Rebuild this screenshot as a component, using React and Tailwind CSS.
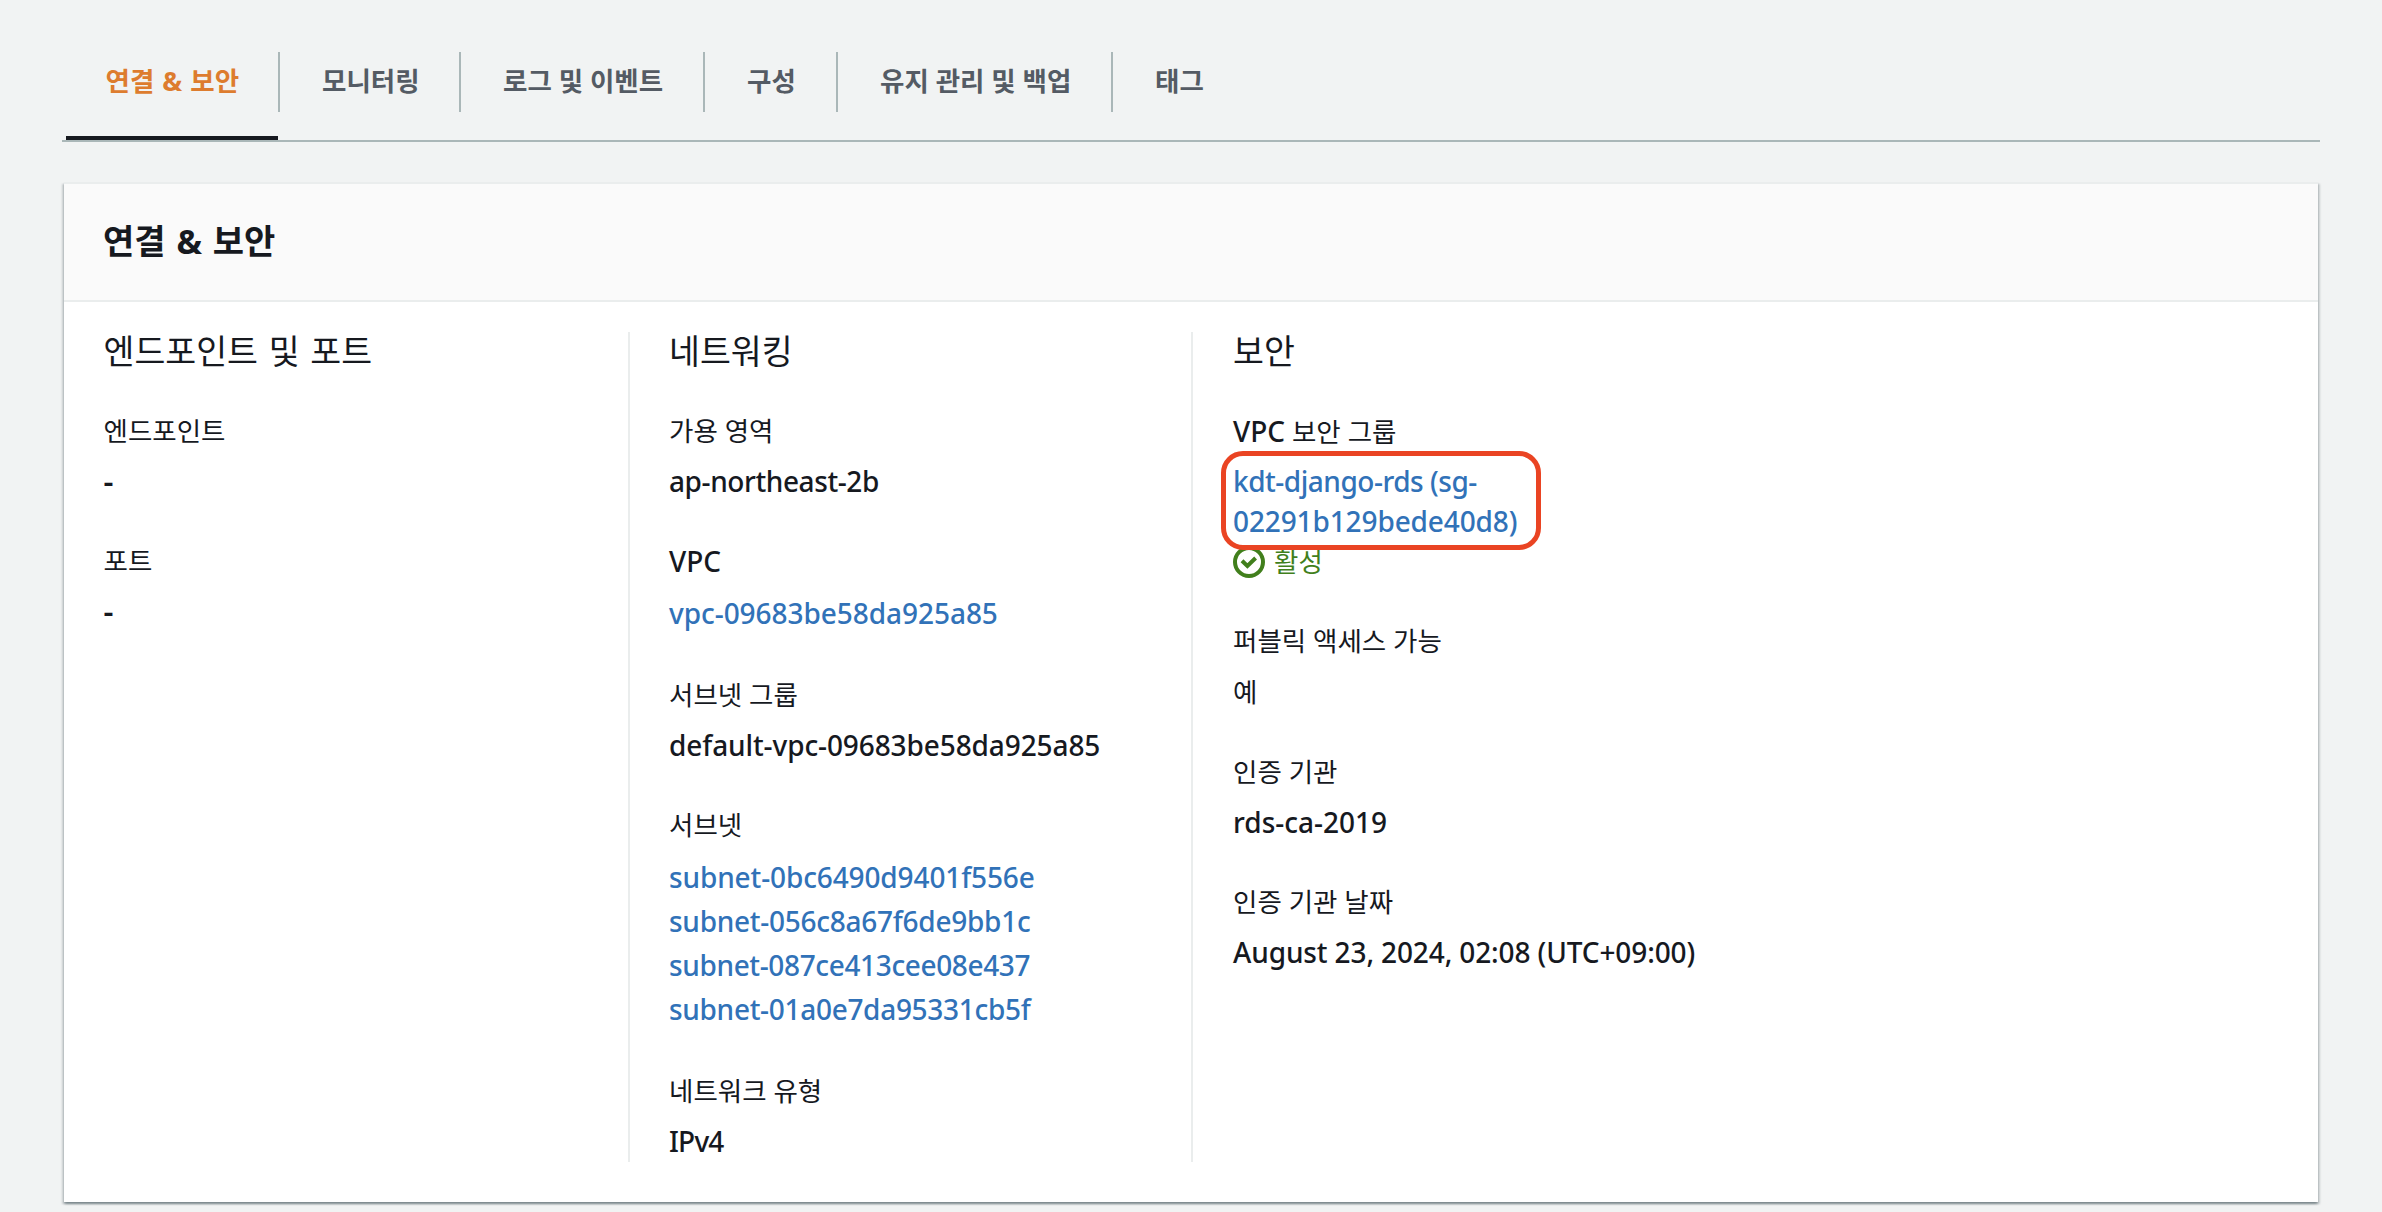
const KO = "font-['Noto_Sans','Noto_Sans_CJK_KR',sans-serif]";

const tabs = [
  { label: "연결 & 보안", cls: "w-[218px] pl-[43.5px] [word-spacing:1.2px]", active: true },
  { label: "모니터링", cls: "w-[181px] pl-[42px]" },
  { label: "로그 및 이벤트", cls: "w-[244px] pl-[42px]" },
  { label: "구성", cls: "w-[133px] pl-[42px]" },
  { label: "유지 관리 및 백업", cls: "w-[275px] pl-[42px]" },
  { label: "태그", cls: "w-[133px] pl-[42px]", last: true },
];

function Tab({ label, cls, active, last }) {
  return (
    <div className={`relative flex h-full shrink-0 pt-[52px] ${cls}`}>
      <span
        className={`whitespace-nowrap text-[26.5px] font-bold leading-[59px] ${
          active ? "text-[#dd7c2e]" : "text-[#545b64]"
        }`}
      >
        {label}
      </span>
      {!last && <i className="absolute right-0 top-[52px] h-[60px] w-[2px] bg-[#aab7b8]" />}
      {active && <i className="absolute bottom-0 left-[4px] right-[2px] h-[4px] bg-[#16191f]" />}
    </div>
  );
}

function Column({ title, className, children }) {
  return (
    <section className={className}>
      <h3 className="-mt-px h-[80px] whitespace-nowrap text-[33.6px] leading-[40px] [word-spacing:2px]">{title}</h3>
      <div className="flex flex-col gap-[40px]">{children}</div>
    </section>
  );
}

function Field({ label, children }) {
  return (
    <div className="flex flex-col gap-[10px]">
      <div className="h-[40px] whitespace-nowrap text-[26.5px] leading-[40px]">{label}</div>
      <div className="text-[28px] font-medium leading-[40px]">{children}</div>
    </div>
  );
}

const Latin = ({ children }) => <span className="text-[28px] font-medium">{children}</span>;

const Empty = () => <span className="block h-[40px] text-[31px] font-semibold leading-[40px]">-</span>;

function Link({ children, className = "" }) {
  return <a className={`block h-[44px] whitespace-nowrap leading-[44px] text-[#3172b8] ${className}`}>{children}</a>;
}

export default function App() {
  return (
    <div className={`h-[1212px] w-full overflow-hidden bg-[#f1f3f3] px-[62px] text-[#16191f] ${KO}`}>
      <nav className="flex h-[142px] border-b-2 border-[#aab7b8]">
        {tabs.map((t) => (
          <Tab key={t.label} {...t} />
        ))}
      </nav>

      <main className="mx-[2px] mt-[40px] h-[1020px] border-t-2 border-[#eaeded] bg-white shadow-[0_2px_2px_0_rgba(0,28,36,0.3),2px_2px_2px_0_rgba(0,28,36,0.15),-2px_2px_2px_0_rgba(0,28,36,0.15)]">
        <header className="h-[118px] border-b-2 border-[#eaeded] bg-[#fafafa] px-[39px]">
          <h2 className="text-[34px] font-bold leading-[114px] [word-spacing:2px]">연결 &amp; 보안</h2>
        </header>

        <div className="flex h-[860px] pl-[39.5px] pt-[30px]">
          <Column title="엔드포인트 및 포트" className="w-[524.5px]">
            <Field label="엔드포인트">
              <Empty />
            </Field>
            <Field label="포트">
              <Empty />
            </Field>
          </Column>

          <Column title="네트워킹" className="w-[563px] border-l-2 border-[#eaeded] pl-[39px]">
            <Field label="가용 영역">
              <span className="tracking-[-0.4px]">ap-northeast-2b</span>
            </Field>
            <Field label={<Latin>VPC</Latin>}>
              <Link className="tracking-[-0.05px]">vpc-09683be58da925a85</Link>
            </Field>
            <Field label="서브넷 그룹">
              <span className="tracking-[-0.1px]">default-vpc-09683be58da925a85</span>
            </Field>
            <Field label="서브넷">
              <Link className="tracking-[-0.12px]">subnet-0bc6490d9401f556e</Link>
              <Link className="tracking-[-0.26px]">subnet-056c8a67f6de9bb1c</Link>
              <Link className="tracking-[-0.36px]">subnet-087ce413cee08e437</Link>
              <Link className="tracking-[-0.3px]">subnet-01a0e7da95331cb5f</Link>
            </Field>
            <Field label="네트워크 유형">
              <span className="tracking-[-0.8px]">IPv4</span>
            </Field>
          </Column>

          <Column title="보안" className="w-[640px] border-l-2 border-[#eaeded] pl-[40px]">
            <Field
              label={
                <>
                  <Latin>VPC</Latin> 보안 그룹
                </>
              }
            >
              <div className="relative">
                <a className="block text-[#3172b8]">
                  <span className="tracking-[-0.48px]">kdt-django-rds (sg-</span>
                  <br />
                  <span className="tracking-[-0.12px]">02291b129bede40d8)</span>
                </a>
                <div className="flex h-[40px] items-center gap-[9px] pt-[2px] text-[26.5px] font-normal text-[#417f1c]">
                  <svg width="32" height="32" viewBox="0 0 32 32" fill="none" stroke="currentColor" strokeWidth="4">
                    <circle cx="16" cy="16" r="14" />
                    <path d="M9 14.8l5.4 5.2L22.6 12" />
                  </svg>
                  <span>활성</span>
                </div>
                <i className="absolute left-[-12px] top-[-10px] h-[99px] w-[320px] rounded-[22px] border-[5px] border-[#ea4423]" />
              </div>
            </Field>
            <Field label="퍼블릭 액세스 가능">
              <span className="text-[26.5px] font-normal">예</span>
            </Field>
            <Field label="인증 기관">rds-ca-2019</Field>
            <Field label="인증 기관 날짜">
              <span className="tracking-[-0.12px]">August 23, 2024, 02:08 (UTC+09:00)</span>
            </Field>
          </Column>
        </div>
      </main>
    </div>
  );
}
